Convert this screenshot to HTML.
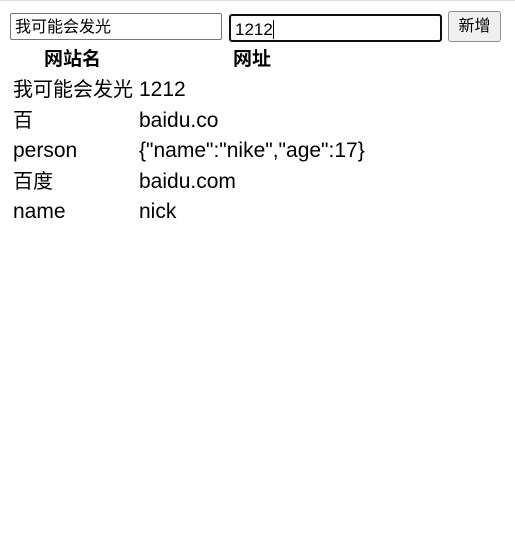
<!DOCTYPE html>
<html><head><meta charset="utf-8"><style>
body{margin:0;width:515px;height:558px;background:#fff;font-family:"Liberation Sans","Noto Sans CJK SC",sans-serif;position:relative;overflow:hidden}
.top{position:absolute;left:0;top:0;width:515px;height:1px;background:#ddd}
.in{position:absolute;box-sizing:border-box;font-size:16px;line-height:1;padding:6px 4px 0;color:#000;background:#fff}
.a{left:10px;top:13px;width:212px;height:27px;border:1px solid #767676;border-radius:2px}
.b{left:229px;top:14px;width:213px;height:28px;border:2px solid #101010;border-radius:3px;padding:5px 4px 0;font-size:17px}
.btn{position:absolute;left:448px;top:11px;width:53px;height:31px;box-sizing:border-box;border:1px solid #8f8f8f;border-radius:3px;background:#efefef;font-size:16px;text-align:center;line-height:29px}
.h{position:absolute;top:48px;font-weight:bold;font-size:19px;line-height:24px}
.r,.c{position:absolute;font-size:20px;line-height:24px;white-space:nowrap}
.r{left:13px}.c{left:139px}
.l{font-size:21px}
</style></head><body>
<div class="top"></div>
<div class="in a">我可能会发光</div>
<div class="in b">1212<span style="border-left:1px solid #000"></span></div>
<div class="btn">新增</div>
<div class="h" style="left:44px">网站名</div>
<div class="h" style="left:233px">网址</div>
<div class="r" style="top:78px">我可能会发光</div><div class="c l" style="top:78px">1212</div>
<div class="r" style="top:109px">百</div><div class="c l" style="top:109px">baidu.co</div>
<div class="r l" style="top:139px">person</div><div class="c l" style="top:139px">{"name":"nike","age":17}</div>
<div class="r" style="top:170px">百度</div><div class="c l" style="top:170px">baidu.com</div>
<div class="r l" style="top:200px">name</div><div class="c l" style="top:200px">nick</div>
</body></html>
